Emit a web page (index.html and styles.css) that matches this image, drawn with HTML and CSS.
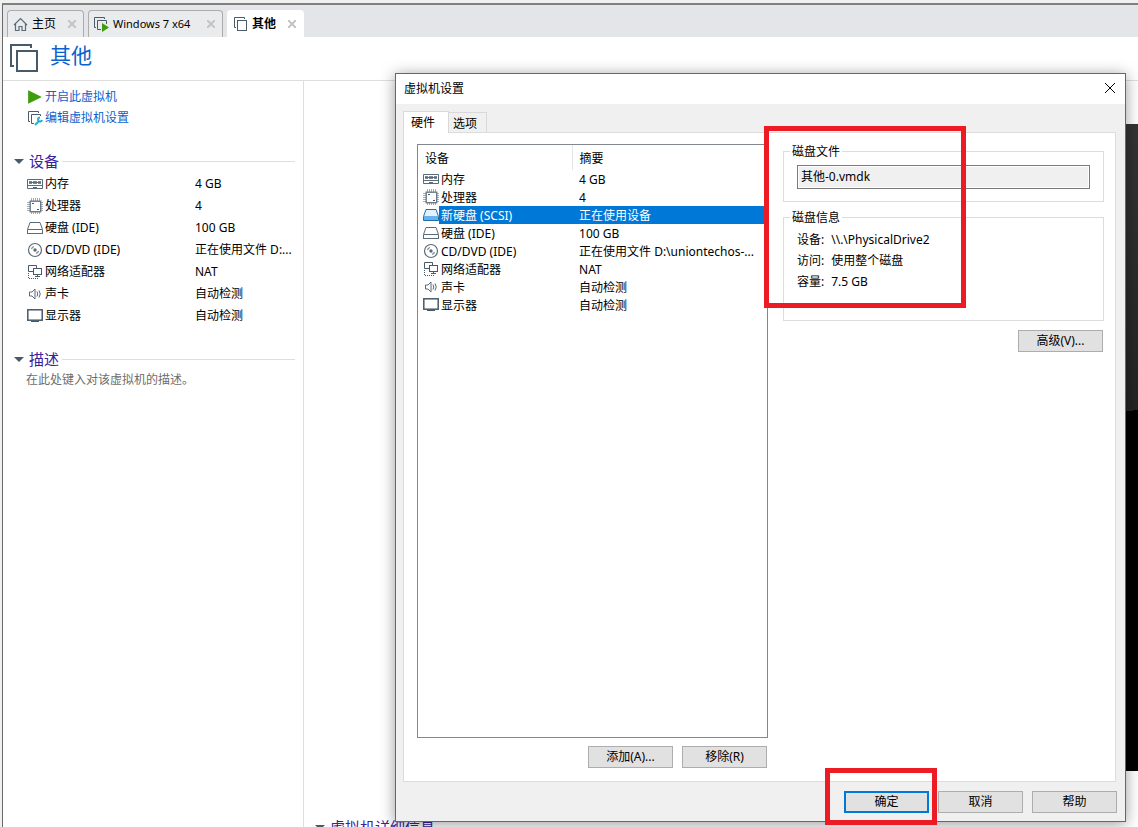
FILE: index.html
```html
<!DOCTYPE html>
<html lang="zh-CN">
<head>
  <meta charset="UTF-8" />
  <title>虚拟机设置</title>
  <meta name="viewport" content="width=device-width, initial-scale=1.0" />
  <link rel="stylesheet" href="styles.css">
</head>
<body>
  <!-- 图标 -->
  <svg class="sprite" aria-hidden="true">
    <symbol id="i-home" viewBox="0 0 16 16">
      <path d="M1 9 7.500 2.500 14 9M2.500 8v6.500h3.500v-4h3v4h3.500V8" fill="none" stroke="#5b6b78" stroke-width="1.2"/>
    </symbol>
    <symbol id="i-vm" viewBox="0 0 16 16">
      <path d="M3 11.500H1.500v-10h10V3" fill="none" stroke="#4a5c6c"/>
      <rect x="4.500" y="4.500" width="9" height="10" fill="#fff" stroke="#4a5c6c"/>
    </symbol>
    <symbol id="i-vm-big" viewBox="0 0 28 28">
      <path d="M4 22H1V1h20v3" fill="none" stroke="#465a69" stroke-width="2"/>
      <rect x="7" y="7" width="20" height="20" fill="#fff" stroke="#465a69" stroke-width="2"/>
    </symbol>
    <symbol id="i-vm-run" viewBox="0 0 16 16">
      <path d="M2 11.500H.5v-10h10V3M7 13.500H3.500v-9h9V8" fill="none" stroke="#4a5c6c"/>
      <path d="M8 7v9l7-4.500z" fill="#3f9c0c"/>
    </symbol>
    <symbol id="i-play" viewBox="0 0 14 14">
      <path d="M1 1v12l12-6z" fill="#3f9c0c"/>
    </symbol>
    <symbol id="i-edit" viewBox="0 0 16 16">
      <path d="M3 11.500H1.500v-10h10V3M7 13.500H4.500v-9h9V6" fill="none" stroke="#4a5c6c"/>
      <path d="M8 15l4-4" stroke="#22b2d0" stroke-width="2"/>
      <path d="M13 7.500a2 2 0 1 0 2 2.500" fill="none" stroke="#22b2d0" stroke-width="2"/>
    </symbol>
    <symbol id="i-memory" viewBox="0 0 16 16">
      <path d="M.5 3.500h15v9H.5z" fill="#fff" stroke="#5b6b78"/>
      <path d="M2 5h3v3H2zM6 5h4v3H6zM11 5h3v3h-3z" fill="#7c8994"/>
      <path d="M1 9h14v1H1zM6 11h4v2H6z" fill="#5b6b78"/>
      <path d="M2 6.500h12" stroke="#5b6b78"/>
    </symbol>
    <symbol id="i-cpu" viewBox="0 0 16 16">
      <path d="M4.500 0v16M6.500 0v16M8.500 0v16M10.500 0v16M12.500 0v16M0 4.500h16M0 6.500h16M0 8.500h16M0 10.500h16M0 12.500h16" stroke="#a3adb5"/>
      <rect x="3.200" y="3.200" width="10.500" height="10.500" fill="#fff" stroke="#6c7a86" stroke-width="1.400"/>
      <path d="M5 5h2v1H5zM10 11h2v1h-2z" fill="#465a69"/>
    </symbol>
    <symbol id="i-disk" viewBox="0 0 16 16">
      <path d="M.5 9.500 3 2.500h10l2.500 7v4H.5z" fill="#fff" stroke="#5b6b78"/>
      <path d="M1 9h14v1H1zM0 13h16v1H0z" fill="#5b6b78"/>
    </symbol>
    <symbol id="i-disk-on" viewBox="0 0 16 16">
      <path d="M.5 9.500 3 2.500h10l2.500 7v4H.5z" fill="#e4f2fe" stroke="#236da8"/>
      <path d="M1 9h14v4H1z" fill="#64b3ef"/>
    </symbol>
    <symbol id="i-cd" viewBox="0 0 16 16">
      <circle cx="8" cy="8" r="6.500" fill="#fff" stroke="#5b6b78" stroke-width="1.200"/>
      <circle cx="8" cy="8" r="1.700" fill="#5b6b78"/>
      <path d="M4.500 7A4 4 0 0 1 7 4.500M11.500 9A4 4 0 0 1 9 11.500" fill="none" stroke="#7c8994" stroke-width="1.300"/>
    </symbol>
    <symbol id="i-net" viewBox="0 0 16 16">
      <path d="M6 7.500H1.500v-6h8V4" fill="none" stroke="#465a69"/>
      <rect x="6.500" y="4.500" width="8" height="6" fill="#fff" stroke="#465a69"/>
      <path d="M8 13h5v-1h-2v-1h-1v1H8z" fill="#465a69"/>
      <path d="M1.500 9v5.500H11" fill="none" stroke="#465a69" stroke-dasharray="1 1"/>
    </symbol>
    <symbol id="i-sound" viewBox="0 0 16 16">
      <path d="M2.500 6v4H5l3 3V3L5 6z" fill="#fff" stroke="#5b6b78"/>
      <path d="M10 5.500q1.500 2.500 0 5M12 4.500q2.500 3.500 0 7" fill="none" stroke="#5b6b78"/>
    </symbol>
    <symbol id="i-display" viewBox="0 0 16 16">
      <rect x=".8" y="1.800" width="14.400" height="10.400" fill="#fff" stroke="#465a69" stroke-width="1.500"/>
      <path d="M4 13.500h8" stroke="#465a69"/>
    </symbol>
  </svg>

  <div class="app">
    <nav class="vm-tabs">
      <div class="vm-tab">
        <button type="button" class="vm-tab-name"><svg class="icon"><use href="#i-home"/></svg>主页</button>
        <button type="button" class="vm-tab-close" aria-label="关闭"><svg viewBox="0 0 8 8"><path d="M0 0l8 8M8 0L0 8"/></svg></button>
      </div>
      <div class="vm-tab">
        <button type="button" class="vm-tab-name wide"><svg class="icon"><use href="#i-vm-run"/></svg>Windows 7 x64</button>
        <button type="button" class="vm-tab-close" aria-label="关闭"><svg viewBox="0 0 8 8"><path d="M0 0l8 8M8 0L0 8"/></svg></button>
      </div>
      <div class="vm-tab active">
        <button type="button" class="vm-tab-name"><svg class="icon"><use href="#i-vm"/></svg>其他</button>
        <button type="button" class="vm-tab-close" aria-label="关闭"><svg viewBox="0 0 8 8"><path d="M0 0l8 8M8 0L0 8"/></svg></button>
      </div>
    </nav>

    <header class="vm-header">
      <svg class="icon-big"><use href="#i-vm-big"/></svg>
      <h1>其他</h1>
    </header>

    <div class="vm-body">
      <aside class="sidebar">
        <div class="actions">
          <a href="#"><svg class="icon"><use href="#i-play"/></svg>开启此虚拟机</a>
          <a href="#"><svg class="icon"><use href="#i-edit"/></svg>编辑虚拟机设置</a>
        </div>

        <h2 class="section-title">设备</h2>
        <table class="summary">
          <tr><td class="ic"><svg class="icon"><use href="#i-memory"/></svg></td><td class="name">内存</td><td>4 GB</td></tr>
          <tr><td class="ic"><svg class="icon"><use href="#i-cpu"/></svg></td><td class="name">处理器</td><td>4</td></tr>
          <tr><td class="ic"><svg class="icon"><use href="#i-disk"/></svg></td><td class="name">硬盘 (IDE)</td><td>100 GB</td></tr>
          <tr><td class="ic"><svg class="icon"><use href="#i-cd"/></svg></td><td class="name">CD/DVD (IDE)</td><td>正在使用文件 D:...</td></tr>
          <tr><td class="ic"><svg class="icon"><use href="#i-net"/></svg></td><td class="name">网络适配器</td><td>NAT</td></tr>
          <tr><td class="ic"><svg class="icon"><use href="#i-sound"/></svg></td><td class="name">声卡</td><td>自动检测</td></tr>
          <tr><td class="ic"><svg class="icon"><use href="#i-display"/></svg></td><td class="name">显示器</td><td>自动检测</td></tr>
        </table>

        <h2 class="section-title">描述</h2>
        <textarea class="description" aria-label="描述" placeholder="在此处键入对该虚拟机的描述。"></textarea>
      </aside>

      <main class="console">
        <div class="screen"></div>
        <h2 class="section-title">虚拟机详细信息</h2>
      </main>
    </div>
  </div>

  <div class="dialog" role="dialog" aria-labelledby="dialog-title">
    <div class="dialog-title">
      <span id="dialog-title">虚拟机设置</span>
      <button type="button" class="dialog-close" aria-label="关闭"><svg viewBox="0 0 10 10"><path d="M0 0l10 10M10 0L0 10"/></svg></button>
    </div>

    <div class="tabs">
      <button type="button" class="tab active">硬件</button>
      <button type="button" class="tab">选项</button>
    </div>

    <div class="panel">
      <div class="devices">
        <div class="device-list">
          <table>
            <colgroup>
              <col class="w-icon"><col class="w-name"><col>
            </colgroup>
            <thead>
              <tr><th colspan="2" class="col-device">设备</th><th class="col-summary">摘要</th></tr>
            </thead>
            <tbody>
              <tr><td class="ic"><svg class="icon"><use href="#i-memory"/></svg></td><td class="name">内存</td><td>4 GB</td></tr>
              <tr><td class="ic"><svg class="icon"><use href="#i-cpu"/></svg></td><td class="name">处理器</td><td>4</td></tr>
              <tr class="selected"><td class="ic"><svg class="icon"><use href="#i-disk-on"/></svg></td><td class="name">新硬盘 (SCSI)</td><td>正在使用设备</td></tr>
              <tr><td class="ic"><svg class="icon"><use href="#i-disk"/></svg></td><td class="name">硬盘 (IDE)</td><td>100 GB</td></tr>
              <tr><td class="ic"><svg class="icon"><use href="#i-cd"/></svg></td><td class="name">CD/DVD (IDE)</td><td>正在使用文件 D:\uniontechos-...</td></tr>
              <tr><td class="ic"><svg class="icon"><use href="#i-net"/></svg></td><td class="name">网络适配器</td><td>NAT</td></tr>
              <tr><td class="ic"><svg class="icon"><use href="#i-sound"/></svg></td><td class="name">声卡</td><td>自动检测</td></tr>
              <tr><td class="ic"><svg class="icon"><use href="#i-display"/></svg></td><td class="name">显示器</td><td>自动检测</td></tr>
            </tbody>
          </table>
        </div>
        <div class="device-buttons">
          <button type="button" class="btn">添加(A)...</button>
          <button type="button" class="btn">移除(R)</button>
        </div>
      </div>

      <div class="details">
        <fieldset class="file-box">
          <legend><label for="disk-file">磁盘文件</label></legend>
          <input type="text" id="disk-file" value="其他-0.vmdk" readonly />
        </fieldset>
        <fieldset class="info-box">
          <legend>磁盘信息</legend>
          <dl>
            <div><dt>设备:</dt><dd>\\.\PhysicalDrive2</dd></div>
            <div><dt>访问:</dt><dd>使用整个磁盘</dd></div>
            <div><dt>容量:</dt><dd>7.5 GB</dd></div>
          </dl>
        </fieldset>
        <button type="button" class="btn">高级(V)...</button>
        <div class="mark mark-disk"></div>
      </div>
    </div>

    <div class="dialog-footer">
      <div class="ok-wrap">
        <button type="button" class="btn primary">确定</button>
        <div class="mark mark-ok"></div>
      </div>
      <button type="button" class="btn">取消</button>
      <button type="button" class="btn">帮助</button>
    </div>
  </div>
</body>
</html>
```
FILE: styles.css
```css
*, *::before, *::after {
  box-sizing: border-box;
}

html, body {
  height: 100%;
  margin: 0;
  overflow: hidden;
}

body {
  position: relative;
  padding: 3px 0 0 2px;
  background: #f0f0f0;
  color: #000;
  font-family: "Noto Sans", "Noto Sans CJK SC", sans-serif;
  font-size: 12px;
  line-height: 16px;
}

button, input, textarea {
  font: inherit;
  color: inherit;
}

h1, h2, dl, dd {
  margin: 0;
  font-weight: normal;
}

table {
  width: 100%;
  border-collapse: collapse;
  table-layout: fixed;
}

td, th {
  padding: 0;
  text-align: left;
  font-weight: normal;
  white-space: nowrap;
  overflow: hidden;
  text-overflow: ellipsis;
}

.sprite {
  position: absolute;
  width: 0;
  height: 0;
}

.icon {
  display: block;
  flex: none;
  width: 16px;
  height: 16px;
}

/* main window */
.app {
  display: flex;
  flex-direction: column;
  height: 100%;
  border-top: 2px solid #808080;
  border-left: 1px solid #696969;
  background: #fff;
}

.vm-tabs {
  display: flex;
  gap: 4px;
  padding: 5px 4px 0;
  background: #e3e5e8;
}

.vm-tab {
  display: flex;
  align-items: center;
  justify-content: space-between;
  min-width: 77px;
  height: 27px;
  padding: 0 7px 0 5px;
  border: 1px solid #acacac;
  border-bottom: 0;
  border-radius: 4px 4px 0 0;
  background: #e9ebed;
}

.vm-tab.active {
  border-color: #fff;
  background: #fff;
  font-weight: bold;
}

.vm-tab-name {
  display: flex;
  align-items: center;
  gap: 3px;
  padding: 0;
  border: 0;
  background: none;
}

.vm-tab-name.wide {
  width: 113px;
  font-size: 11px;
}

.vm-tab-close {
  display: flex;
  padding: 0;
  border: 0;
  background: none;
}

.vm-tab-close svg {
  width: 8px;
  height: 8px;
  stroke: #c4c4c4;
  stroke-width: 2;
}

.vm-header {
  display: flex;
  align-items: flex-start;
  gap: 12px;
  height: 44px;
  padding: 7px 7px 0;
  border-bottom: 1px solid #dedede;
}

.icon-big {
  width: 28px;
  height: 28px;
}

h1 {
  color: #0b62cc;
  font-size: 21px;
  line-height: 22px;
}

.vm-body {
  flex: 1;
  display: flex;
  min-height: 0;
}

.sidebar {
  width: 301px;
  border-right: 1px solid #dedede;
}

.actions {
  padding: 5px 24px 22px;
}

.actions a {
  display: flex;
  align-items: center;
  gap: 2px;
  height: 21px;
  color: #0b62cc;
  text-decoration: none;
}

.section-title {
  display: flex;
  flex: none;
  align-items: center;
  gap: 3px;
  height: 22px;
  margin: 0 8px 0 11px;
  color: #39239c;
  font-size: 15px;
  white-space: nowrap;
}

.section-title::before {
  content: "";
  margin-right: 2px;
  border: 5px solid transparent;
  border-top-color: #465a69;
  border-bottom: 0;
}

.section-title::after {
  content: "";
  flex: 1;
  height: 1px;
  background: #dedede;
}

.summary {
  width: auto;
  margin: 1px 10px 21px 24px;
}

.summary tr {
  height: 22px;
}

.summary .ic {
  width: 18px;
}

.summary .name {
  width: 151px;
}

.summary td:last-child {
  width: 98px;
}

.description {
  display: block;
  width: 270px;
  height: 48px;
  margin: 2px 0 0 23px;
  padding: 0;
  border: 0;
  outline: 0;
  resize: none;
}

.description::placeholder {
  color: #6d6d6d;
}

.console {
  flex: 1;
  display: flex;
  flex-direction: column;
  padding-top: 43px;
}

.screen {
  flex: 1;
  margin: 0 0 45px 120px;
  background: linear-gradient(174deg, #383838, #242424 50%, #000 50%);
}

/* the details section runs on below the window edge */
.console .section-title {
  margin-bottom: -11px;
}

/* settings dialog */
.dialog {
  position: absolute;
  top: 73px;
  right: 12px;
  bottom: 5px;
  left: 395px;
  display: flex;
  flex-direction: column;
  border: 1px solid #1a7bc9;
  background: #f0f0f0;
  box-shadow: 0 2px 14px rgba(0, 0, 0, 0.4);
}

.dialog-title {
  display: flex;
  align-items: center;
  justify-content: space-between;
  height: 30px;
  padding: 0 10px 0 8px;
  background: #fff;
}

.dialog-close {
  display: flex;
  padding: 0 0 2px;
  border: 0;
  background: none;
}

.dialog-close svg {
  width: 10px;
  height: 10px;
  stroke: #000;
  overflow: visible;
}

.tabs {
  display: flex;
  align-items: flex-end;
  height: 28px;
  padding: 0 7px;
}

.tab {
  height: 20px;
  padding: 2px 9px 0 4px;
  border: 1px solid #d9d9d9;
  border-left: 0;
  border-bottom: 0;
  background: #f0f0f0;
}

.tab.active {
  z-index: 1;
  height: 22px;
  margin-bottom: -1px;
  padding: 0 13px 0 7px;
  border-left: 1px solid #d9d9d9;
  background: #fff;
}

.panel {
  flex: 1;
  display: flex;
  gap: 15px;
  min-height: 0;
  margin: 0 9px 0 7px;
  padding: 11px 11px 13px 13px;
  border: 1px solid #dcdcdc;
  background: #fff;
}

.devices {
  flex: 0 0 351px;
  display: flex;
  flex-direction: column;
  gap: 8px;
}

.device-list {
  flex: 1;
  border: 1px solid #828790;
}

.device-list thead tr {
  height: 25px;
}

.device-list tbody tr {
  height: 18px;
}

.device-list td:not(.ic) {
  padding-top: 2px;
}

.device-list th {
  padding-top: 3px;
}

.device-list .icon {
  margin-left: 5px;
}

.w-icon {
  width: 21px;
}

.w-name {
  width: 133px;
}

.col-device {
  padding-left: 7px;
  border-right: 1px solid #e5e5e5;
}

.col-summary,
.device-list td:last-child {
  padding-left: 7px;
}

.device-list .name {
  padding-left: 2px;
}

.device-list .selected td:not(.ic) {
  background: #0078d7;
  color: #fff;
}

.device-buttons {
  display: flex;
  justify-content: flex-end;
  gap: 9px;
  margin-right: 1px;
}

.btn {
  width: 85px;
  height: 22px;
  padding: 0;
  border: 1px solid #adadad;
  background: #e1e1e1;
}

.btn.primary {
  display: block;
  border: 2px solid #0078d7;
}

.details {
  position: relative;
  flex: 1;
  display: flex;
  flex-direction: column;
  align-items: flex-end;
}

.details .btn {
  margin-right: 1px;
}

fieldset {
  width: 100%;
  min-width: 0;
  margin: 0;
  padding: 0 13px;
  border: 1px solid #dcdcdc;
}

legend {
  height: 14px;
  margin-left: -7px;
  padding: 0 2px;
}

.file-box {
  height: 58px;
  margin-bottom: 8px;
}

.file-box input {
  display: block;
  width: 100%;
  height: 24px;
  margin-top: 7px;
  padding: 0 3px 2px;
  border: 1px solid #7a7a7a;
  outline: 0;
  background: #f0f0f0;
  box-shadow: inset 0 0 0 1px #fff;
}

.info-box {
  height: 111px;
  margin-bottom: 9px;
}

.info-box dl {
  margin-top: 5px;
}

.info-box dl div {
  display: flex;
  gap: 7px;
  height: 21px;
  align-items: center;
}

.dialog-footer {
  display: flex;
  justify-content: flex-end;
  gap: 9px;
  padding: 9px 8px 8px;
}

.ok-wrap {
  position: relative;
}

/* red highlight frames */
.mark {
  position: absolute;
  border: 5px solid #ed1c24;
  pointer-events: none;
}

.mark-disk {
  top: -18px;
  left: -19px;
  width: 202px;
  height: 182px;
}

.mark-ok {
  top: -23px;
  left: -19px;
  width: 112px;
  height: 57px;
}
```
